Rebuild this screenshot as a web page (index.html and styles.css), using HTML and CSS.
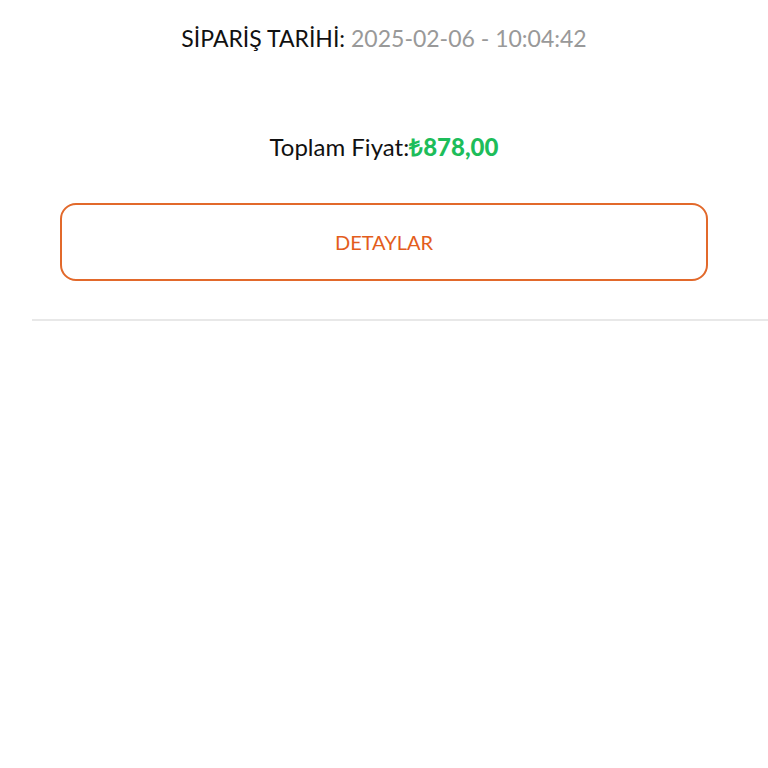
FILE: index.html
```html
<!DOCTYPE html>
<html lang="tr">
<head>
    <meta charset="UTF-8">
    <meta name="viewport" content="width=device-width, initial-scale=1.0">
    <title>Siparişlerim</title>
    <link rel="stylesheet" href="styles.css">
</head>
<body>
    <div class="order">
        <div class="order-body">
            <p class="order-date">SİPARİŞ TARİHİ: <span class="muted">2025-02-06 - 10:04:42</span></p>
            <p class="order-total">Toplam Fiyat:<span class="price"><span class="currency">₺</span>878,00</span></p>
            <button class="details-btn">DETAYLAR</button>
        </div>
        <div class="divider"></div>
    </div>
</body>
</html>
```

FILE: styles.css
```css
body {
    margin: 0;
    background-color: #ffffff;
    font-family: Lato, "Open Sans", sans-serif;
    color: #111;
}

.order-body {
    padding: 0 60px;
    text-align: center;
}

.order-date {
    margin: 0;
    padding-top: 24px;
    font-size: 23px;
    line-height: 28px;
}

.muted {
    color: #999;
}

.order-total {
    margin: 0;
    padding-top: 81px;
    font-size: 24px;
    line-height: 28px;
}

.price {
    color: #1dbd5a;
    font-weight: 900;
}

.currency {
    font-family: "Open Sans", sans-serif;
    font-weight: bold;
}

.details-btn {
    display: block;
    width: 100%;
    height: 78px;
    margin-top: 42px;
    background: #fff;
    border: 2px solid #e2692b;
    border-radius: 16px;
    color: #e35d1c;
    font-family: inherit;
    font-size: 20px;
}

.divider {
    margin-top: 38px;
    margin-left: 32px;
    height: 2px;
    background-color: #e8e8e8;
}
```
